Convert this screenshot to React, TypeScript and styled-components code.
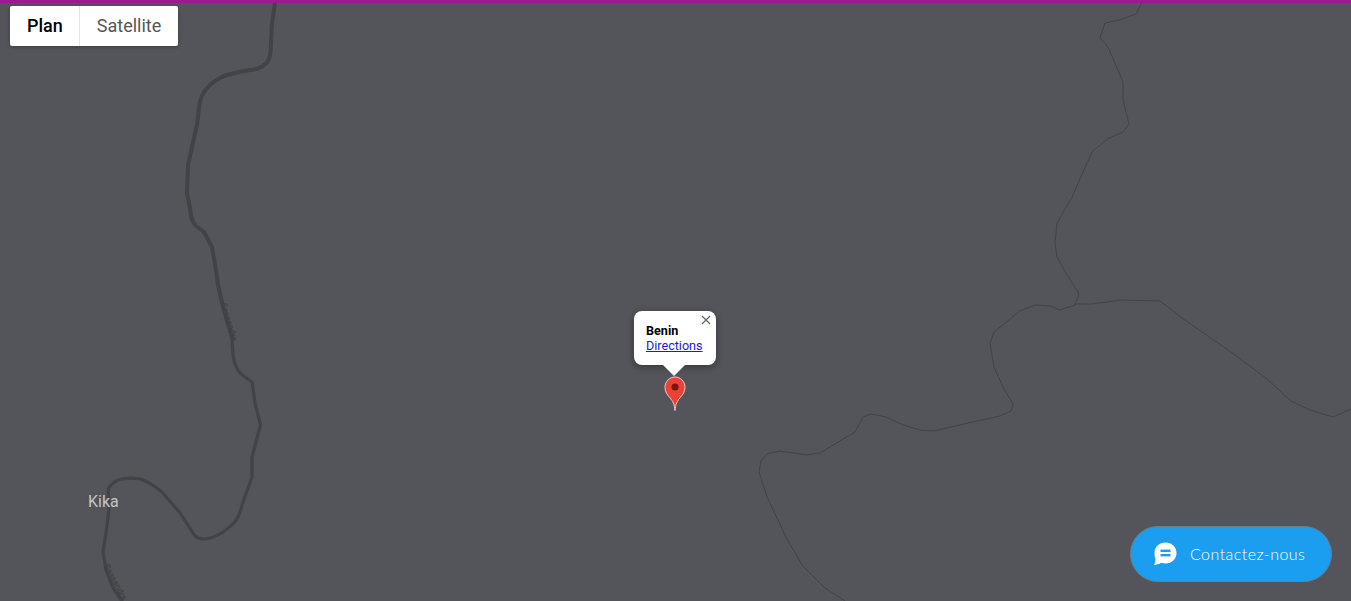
import React, { FC } from 'react'
import styled, { createGlobalStyle } from 'styled-components'

const BOLD_RIVER =
  'M275 3 L272 23 L270.5 53 Q269 62 264 65 Q260 69 250 70 Q237 72 227 75 Q215 79 207 88 Q200 96 199 108 L197 125 L192 147 L188 165 L187 193 L190 208 Q191 221 196 226 L204 232 L212 247 L216 270 L218 285 L223 307 L232 338'
const THIN_RIVER_NORTH =
  'M1141.5 3 L1136 14 L1123 19 L1105 23 L1100 38 L1108 47 L1123 82 L1123 100 L1129 124 L1123 132 L1107 139 L1092 152 L1072 197 L1057 223 L1055 243 L1057 257 L1066 273 L1079 294 L1075 305 L1060 310 L1050 306 L1035 305 L1020 311 L994 332 L990 343 L994 367 L1003 387 L1013 404 L1011 411 L1000 416 L968 423 L934 431 L920 430 L903 425 L886 417 L871 414 L863 417 L855 432 L820 453 L807 455 L780 451 L767 454 L761 461 L759 472 L767 497 L786 537 L802 565 L825 588 L845 601'
const THIN_RIVER_EAST =
  'M1075 304 L1092 304 L1121 300 L1160 301 L1182 318 L1231 352 L1266 378 L1291 401 L1310 410 L1333 417 L1351 409'
const LOWER_RIVER =
  'M232 338 L233 355 Q235 368 241 374 L252 382 L255 403 L260.5 425 L252 457 L252 477 L242 505 Q239 519 232 525 L223 532 Q212 539 204 539 Q198 539 195 536 L180 513 L162 492 Q150 482 140 479 Q128 477 118 480 Q110 484 108 490 L109 510 L106 533 L103 552 L106 570 L113 588 L122 601'

const App: FC = () => {
  return (
    <Page>
      <GlobalStyle />
      <TopBar />
      <MapArea>
        <MapDrawing viewBox="0 0 1351 601" aria-hidden="true">
          <RiverLine d={BOLD_RIVER} $width={4} />
          <RiverLine d={LOWER_RIVER} $width={3.2} />
          <RiverLine d={THIN_RIVER_NORTH} $width={1} />
          <RiverLine d={THIN_RIVER_EAST} $width={1} />
          <RiverLabel transform="translate(221 304) rotate(73)">Sassandra</RiverLabel>
          <RiverLabel transform="translate(104 566) rotate(62)">Sassandra</RiverLabel>
        </MapDrawing>

        <MapTypes>
          <MapTypeButton $active>Plan</MapTypeButton>
          <MapTypeButton>Satellite</MapTypeButton>
        </MapTypes>

        <PlaceLabel>Kika</PlaceLabel>

        <InfoWindow>
          <CloseButton aria-label="Fermer">
            <svg width="10" height="10" viewBox="0 0 10 10">
              <path d="M1 1 L9 9 M9 1 L1 9" stroke="#5f6368" strokeWidth="1.2" fill="none" />
            </svg>
          </CloseButton>
          <PlaceName>Benin</PlaceName>
          <DirectionsLink href="#">Directions</DirectionsLink>
        </InfoWindow>

        <Pin width="22" height="35" viewBox="0 0 22 35" aria-hidden="true">
          <path
            d="M11 34.5 C10.4 28 8.8 25.2 6 21.8 C3.2 18.6 1 15.9 1 11.4 C1 5.4 5.5 1 11 1 C16.5 1 21 5.4 21 11.4 C21 15.9 18.8 18.6 16 21.8 C13.2 25.2 11.6 28 11 34.5 Z"
            fill="#ea4335"
            stroke="#f6c9c4"
            strokeWidth="1"
          />
          <circle cx="11" cy="11" r="3.6" fill="#7d1410" />
        </Pin>

        <ContactButton>
          <svg width="26" height="25" viewBox="0 0 26 25" aria-hidden="true">
            <path
              d="M13.5 1.5 C19.8 1.5 24.5 6 24.5 12 C24.5 18 19.8 22.5 13.5 22.5 C12 22.5 10.5 22.2 9.2 21.7 C7 23 4.6 23.8 2 24 C3 22.6 3.4 20.6 3.5 18 C2.6 16.2 2.5 14 2.5 12 C2.5 6 7.2 1.5 13.5 1.5 Z"
              fill="#fff"
            />
            <rect x="8.5" y="8.6" width="10" height="2.4" fill="#1b9df0" />
            <rect x="8.5" y="13" width="10" height="2.4" fill="#1b9df0" />
          </svg>
          <ContactText>Contactez-nous</ContactText>
        </ContactButton>
      </MapArea>
    </Page>
  )
}

export default App

const GlobalStyle = createGlobalStyle`
  html, body {
    margin: 0;
    padding: 0;
    overflow: hidden;
    background: #54555a;
  }
  * {
    box-sizing: border-box;
  }
`

const Page = styled.div`
  display: flex;
  flex-direction: column;
  width: 100vw;
  height: 100vh;
  font-family: 'Roboto', sans-serif;
`

const TopBar = styled.div`
  flex: 0 0 3px;
  background-color: #a0178e;
  position: relative;
  z-index: 2;
`

const MapArea = styled.div`
  position: relative;
  flex: 1;
  display: flex;
  flex-direction: column;
  align-items: flex-start;
  padding: 3px 19px 19px 10px;
  background-color: #54555a;
`

const MapDrawing = styled.svg`
  position: absolute;
  top: -3px;
  left: 0;
  width: 1351px;
  height: 601px;
`

const RiverLine = styled.path<{ $width: number }>`
  fill: none;
  stroke: #424347;
  stroke-width: ${(p) => p.$width}px;
  stroke-linejoin: round;
  stroke-linecap: round;
`

const RiverLabel = styled.text`
  font-family: 'Roboto', sans-serif;
  font-size: 8px;
  letter-spacing: 0.2px;
  fill: #38393d;
  stroke: #46474b;
  stroke-width: 0.3px;
`

const MapTypes = styled.div`
  position: relative;
  display: flex;
  height: 40px;
  background: #fff;
  border-radius: 2px;
  box-shadow: 0 1px 4px rgba(0, 0, 0, 0.3);
`

const MapTypeButton = styled.button<{ $active?: boolean }>`
  padding: 0 17px 2px;
  border: 0;
  background: transparent;
  font-family: 'Roboto', sans-serif;
  font-size: 18px;
  font-weight: ${(p) => (p.$active ? 500 : 400)};
  color: ${(p) => (p.$active ? '#000' : '#565656')};

  &:first-child {
    padding-right: 16px;
    border-right: 1px solid #e6e6e6;
  }
`

const PlaceLabel = styled.span`
  position: absolute;
  top: 489px;
  left: 88px;
  font-size: 16px;
  color: #c4c4c7;
  text-shadow: 0 0 2px #54555a, 0 0 2px #54555a;
`

const InfoWindow = styled.div`
  position: absolute;
  top: 308px;
  left: 634px;
  width: 82px;
  height: 54px;
  padding: 12px 12px 0;
  background: #fff;
  border-radius: 8px;
  box-shadow: 0 2px 7px 1px rgba(0, 0, 0, 0.3);
  font-size: 12.6px;
  line-height: 15px;

  &::after {
    content: '';
    position: absolute;
    left: 29px;
    bottom: -11px;
    border-left: 11px solid transparent;
    border-right: 11px solid transparent;
    border-top: 11px solid #fff;
  }
`

const CloseButton = styled.button`
  position: absolute;
  top: 4px;
  right: 5px;
  display: flex;
  padding: 0;
  border: 0;
  background: transparent;
`

const PlaceName = styled.div`
  font-weight: 700;
  color: #000;
`

const DirectionsLink = styled.a`
  display: block;
  color: #1a1ae0;
  text-decoration: underline;
`

const Pin = styled.svg`
  position: absolute;
  top: 373px;
  left: 664px;
`

const ContactButton = styled.button`
  position: relative;
  display: flex;
  align-items: center;
  gap: 12px;
  align-self: flex-end;
  margin-top: auto;
  width: 202px;
  height: 56px;
  padding: 0 0 2px 21px;
  border: 1px solid #6d7d8c;
  border-radius: 28px;
  background: #1b9df0;
  color: #fff;
`

const ContactText = styled.span`
  font-family: 'Lato', sans-serif;
  font-size: 16px;
  font-weight: 300;
  letter-spacing: 0.45px;
`
